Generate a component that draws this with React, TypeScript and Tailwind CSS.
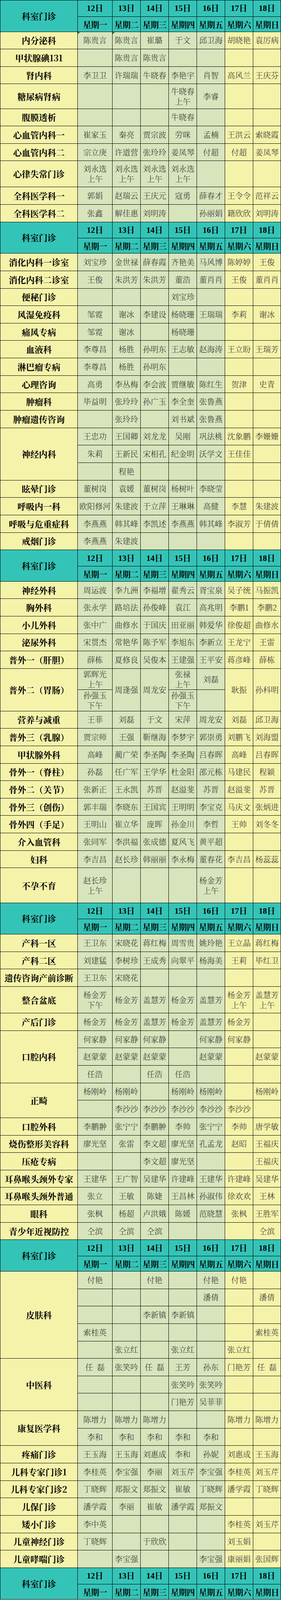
import React from 'react';

type Cell = string | { t: string; span: number } | null;
type Group = { label: string; rows: Cell[][]; h?: string[]; flag?: boolean };

const H = {
  date: 'h-[40.74px]',
  week: 'h-[37.82px]',
  weekLast: 'h-[38.82px]',
  row: 'h-[43.65px]',
  tall65: 'h-[62.09px]',
  tall69: 'h-[65.97px]',
  half: 'h-[53.35px]',
  tall92: 'h-[88.3px]',
  tall70: 'h-[66.94px]',
};
const SPAN: Record<number, string> = { 1: '', 2: 'row-span-2', 3: 'row-span-3', 5: 'row-span-5' };

const dates = ['12日', '13日', '14日', '15日', '16日', '17日', '18日'];
const weeks = ['星期一', '星期二', '星期三', '星期四', '星期五', '星期六', '星期日'];

const r = (s: string): Cell[] => s.split(',').map((x) => x.replace(/\|/g, '\n'));

const sec1: Group[] = [
  { label: '内分泌科', rows: [r('陈贵言,陈贵言,崔璐,于文,邱卫海,胡晓艳,袁厉病')], flag: true },
  { label: '甲状腺碘131', rows: [r(',陈贵言,陈贵言,,,,')] },
  { label: '肾内科', rows: [r('李卫卫,许瑞瑞,牛晓春,李艳宇,肖智,高风兰,王庆芬')] },
  { label: '糖尿病肾病', h: [H.tall65], rows: [r(',,,牛晓春|上午,李睿,,')] },
  { label: '腹膜透析', rows: [r(',,,牛晓春,,,')] },
  { label: '心血管内科一', rows: [r('崔家玉,秦亮,贾宗波,劳咪,孟楠,王洪云,索晓霞')] },
  { label: '心血管内科二', rows: [r('宗立庚,许道营,张玲玲,姜凤琴,付超,付超,姜凤琴')] },
  { label: '心律失常门诊', h: [H.tall69], rows: [r('刘永选|上午,刘永选|上午,刘永选|上午,刘永选|上午,,,')] },
  { label: '全科医学科一', rows: [r('郭娟,赵瑞云,王庆元,寇勇,薛春才,王令令,范祥云')] },
  { label: '全科医学科二', rows: [r('张鑫,解佳惠,刘明涛,,孙丽娟,籍欣欣,刘明涛')] },
];

const sec2: Group[] = [
  { label: '消化内科一诊室', rows: [r('刘宝珍,金世禄,薛春霞,齐艳美,马风博,陈婷婷,王俊')] },
  { label: '消化内科二诊室', rows: [r('王俊,朱洪芳,朱洪芳,董浩,董肖肖,王俊,董肖肖')] },
  { label: '便秘门诊', rows: [r(',,,刘宝珍,,,')] },
  { label: '风湿免疫科', rows: [r('邹霓,谢冰,李建设,杨晓珊,王瑞瑞,李莉,谢冰')] },
  { label: '痛风专病', rows: [r('邹霓,谢冰,,杨晓珊,,,')] },
  { label: '血液科', rows: [r('李尊昌,杨胜,孙明东,王志敏,赵海涛,王立盼,王瑞芳')] },
  { label: '淋巴瘤专病', rows: [r('李尊昌,杨胜,孙明东,,,,')] },
  { label: '心理咨询', rows: [r('高勇,李丛梅,李会波,贾继敏,陈红生,贺津,史青')] },
  { label: '肿瘤科', rows: [r('毕益明,张玲玲,孙广玉,李全奎,张鲁燕,,')] },
  { label: '肿瘤遗传咨询', rows: [r(',张玲玲,,刘书斌,张鲁燕,,')] },
  {
    label: '神经内科',
    rows: [
      r('王忠功,王国卿,刘龙龙,吴刚,巩法桃,沈象鹏,李姗姗'),
      r('朱莉,王新民,宋相孔,纪金明,沃学文,王佳佳,'),
      r(',程艳,,,,,'),
    ],
  },
  { label: '眩晕门诊', rows: [r('董树岗,袁媛,董树岗,杨树叶,李晓莹,,')] },
  { label: '呼吸内一科', rows: [r('欧阳修河,朱建波,于立萍,王琳琳,高健,李慧,朱建波')] },
  { label: '呼吸与危重症科', rows: [r('李燕燕,韩其峰,李凯述,李燕燕,韩其峰,李淑芳,于倩倩')] },
  { label: '戒烟门诊', rows: [r('李燕燕,朱建波,,,,,')] },
];

const sec3: Group[] = [
  { label: '神经外科', rows: [r('周运波,李九洲,李福增,翟秀云,胥宝泉,吴子统,马振凯')] },
  { label: '胸外科', rows: [r('张永学,路培法,孙俊峰,袁江,高兆明,李鹏1,李鹏2')] },
  { label: '小儿外科', rows: [r('张中广,曲修水,于国庆,田亚丽,韩爱华,徐俊超,曲修水')] },
  { label: '泌尿外科', rows: [r('宋贯杰,常艳华,陈予军,李旭东,李新立,王龙宁,王雷')] },
  { label: '普外一（肝胆）', rows: [r('薛栋,夏修良,吴俊本,王建强,王平安,蒋彦峰,薛栋')] },
  {
    label: '普外二（胃肠）',
    h: [H.half, H.half],
    rows: [
      [
        '郭辉光\n上午',
        { t: '周逢强', span: 2 },
        { t: '周龙安', span: 2 },
        '张禄\n上午',
        '刘磊',
        { t: '耿振', span: 2 },
        { t: '孙科明', span: 2 },
      ],
      ['孙强玉\n下午', null, null, '孙强玉\n下午', '', null, null],
    ],
  },
  { label: '营养与减重', rows: [r('王菲,刘磊,于文,宋萍,周龙安,刘磊,邱卫海')] },
  { label: '普外三（乳腺）', rows: [r('贾宗师,王强,靳继海,李梦宇,郭崇勇,刘鹏飞,刘海盟')] },
  { label: '甲状腺外科', rows: [r('高峰,蔺广荣,李圣陶,李圣陶,吕春晖,高峰,吕春晖')] },
  { label: '骨外一（脊柱）', rows: [r('孙磊,任广军,王学华,杜金阳,邵元栋,马建民,程颖')] },
  { label: '骨外二（关节）', rows: [r('张新正,王永凯,苏晋,赵溢斐,苏晋,赵溢斐,苏晋')] },
  { label: '骨外三（创伤）', rows: [r('郭丰瑞,李晓东,王国宾,王明明,李宝克,马庆文,张炳进')] },
  { label: '骨外四（手足）', rows: [r('王明山,崔立华,庞晖,孙金川,李哲,王帅,刘冬冬')] },
  { label: '介入血管科', rows: [r('张同军,李洪福,张成德,夏风飞,黄平超,,')] },
  { label: '妇科', rows: [r('李吉昌,赵长珍,韩丽丽,李永梅,董春花,李吉昌,杨蕊蕊')] },
  { label: '不孕不育', h: [H.tall92], rows: [r('赵长珍|上午,,,,杨金芳|上午,,')] },
];

const sec4: Group[] = [
  { label: '产科一区', rows: [r('王卫东,宋晓花,蒋红梅,周雪贵,姚玲艳,王立晶,蒋红梅')] },
  { label: '产科二区', rows: [r('刘建猛,李树珍,王成秀,向翠平,杨海美,王莉,毕红卫')] },
  { label: '遗传咨询产前诊断', rows: [r('王卫东,宋晓花,,,,,')] },
  {
    label: '整合盆底',
    h: [H.tall70],
    rows: [r('杨金芳|下午,杨金芳,盖慧芳,杨金芳,盖慧芳,杨金芳|上午,盖慧芳|上午')],
  },
  { label: '产后门诊', rows: [r('杨金芳,杨金芳,盖慧芳,杨金芳,盖慧芳,杨金芳,')] },
  {
    label: '口腔内科',
    rows: [
      r('何家静,何家静,何家静,,何家静,何家静,'),
      r('赵蒙蒙,赵蒙蒙,赵蒙蒙,,赵蒙蒙,,赵蒙蒙'),
      r('任浩,,任浩,任浩,,,'),
    ],
  },
  {
    label: '正畸',
    rows: [r('杨刚岭,杨刚岭,,杨刚岭,杨刚岭,,杨刚岭'), r(',李沙沙,李沙沙,李沙沙,李沙沙,李沙沙,')],
  },
  { label: '口腔外科', rows: [r('李鹏翀,张宁宁,李鹏翀,李帅,张宁宁,李帅,唐学敏')] },
  { label: '烧伤整形美容科', rows: [r('廖光坚,张雷,李文超,廖光坚,孔孟龙,赵昭,王福庆')] },
  { label: '压疮专病', rows: [r(',,李文超,廖光坚,,,王福庆')] },
  { label: '耳鼻喉头颈外专家', rows: [r('王建华,王广智,吴建华,许建峰,王建华,许建峰,吴建华')] },
  { label: '耳鼻喉头颈外普通', rows: [r('张立,王敏,陈婕,王昌林,孙淑伟,徐欢欢,王林')] },
  { label: '眼科', rows: [r('张枫,杨超,卢洪娥,陈媛,范晓慧,张枫,王胜军')] },
  { label: '青少年近视防控', rows: [r('仝滨,仝滨,仝滨,,,,仝滨')] },
];

const sec5: Group[] = [
  {
    label: '皮肤科',
    rows: [
      r('付艳,,付艳,,付艳,付艳,'),
      r(',,,,潘倩,,潘倩'),
      r(',,李新镇,李新镇,,,'),
      r('索桂英,,,,,,索桂英'),
      r(',张立红,,张立红,,张立红,'),
    ],
  },
  {
    label: '中医科',
    rows: [
      r('任\u2002磊,张笑吟,任\u2002磊,王芳,孙东,门艳芳,任\u2002磊'),
      r(',,,张笑吟,张笑吟,,'),
      r(',,,门艳芳,吴菲菲,,'),
    ],
  },
  {
    label: '康复医学科',
    rows: [r('陈增力,陈增力,陈增力,,,陈增力,陈增力'), r('李和,李和,李和,李和,李和,,')],
  },
  { label: '疼痛门诊', rows: [r('王玉海,王玉海,刘惠成,李和,孙妮,刘惠成,王玉海')] },
  { label: '儿科专家门诊1', rows: [r('李桂英,李宝强,李丽,刘玉芹,李宝强,李桂英,刘玉芹')] },
  { label: '儿科专家门诊2', rows: [r('丁晓辉,郑振文,郑振文,崔敏,丁晓辉,潘学霞,丁晓辉')] },
  { label: '儿保门诊', rows: [r('潘学霞,李丽,崔敏,潘学霞,郑振文,,')] },
  { label: '矮小门诊', rows: [r('李中英,,,,,李桂英,刘玉芹')] },
  { label: '儿童神经门诊', rows: [r('丁晓辉,,于欣欣,,,刘玉娟,')] },
  { label: '儿童哮喘门诊', rows: [r(',李宝强,,,李宝强,康丽娟,张国辉')] },
];

function Header({ id, last }: { id: string; last?: boolean }) {
  return (
    <React.Fragment>
      <div className="row-span-2 flex items-center justify-center overflow-hidden bg-[#34c4b7] text-[22px] leading-[30px] font-bold text-black">
        科室门诊
      </div>
      {dates.map((d) => (
        <div
          key={id + d}
          className={`flex ${H.date} items-center justify-center overflow-hidden bg-[#34c4b7] font-['Liberation_Serif','Noto_Serif_CJK_SC','Noto_Sans_CJK_SC',serif] text-[21px] leading-[28px] font-bold text-black`}
        >
          {d}
        </div>
      ))}
      {weeks.map((w) => (
        <div
          key={id + w}
          className={`flex ${last ? H.weekLast : H.week} items-center justify-center overflow-hidden whitespace-nowrap bg-[#34c4b7] text-[21px] leading-[28px] font-bold tracking-[-0.5px] text-black`}
        >
          {w}
        </div>
      ))}
    </React.Fragment>
  );
}

function GroupRows({ g }: { g: Group }) {
  const n = g.rows.length;
  const out: React.ReactNode[] = [];
  out.push(
    <div
      key="label"
      className={`${SPAN[n]} flex items-center justify-center overflow-hidden whitespace-nowrap bg-[#f5f3aa] text-[22px] leading-[30px] font-bold text-black`}
    >
      {g.label}
    </div>
  );
  g.rows.forEach((row, ri) => {
    row.forEach((cell, ci) => {
      if (cell === null) return;
      const isObj = typeof cell === 'object';
      const text = isObj ? cell.t : cell;
      const span = isObj ? cell.span : 1;
      const bg = ci < 5 ? 'bg-[#d8e4bc]' : 'bg-[#f5f3aa]';
      const hc = span === 1 ? g.h?.[ri] ?? H.row : '';
      out.push(
        <div
          key={ri + '-' + ci}
          className={`${SPAN[span]} ${hc} ${bg} relative flex items-center justify-center overflow-hidden whitespace-pre-line text-center text-[20px] leading-[26px] font-light text-[#2b2b2b]`}
        >
          {g.flag && ri === 0 && ci < 2 ? (
            <span className="absolute left-0 top-0 h-0 w-0 border-r-[6px] border-t-[6px] border-r-transparent border-t-[#1f8a2e]" />
          ) : null}
          {text}
        </div>
      );
    });
  });
  return <React.Fragment>{out}</React.Fragment>;
}

function Section({ id, groups }: { id: string; groups: Group[] }) {
  return (
    <React.Fragment>
      <Header id={id} />
      {groups.map((g) => (
        <GroupRows key={id + g.label} g={g} />
      ))}
    </React.Fragment>
  );
}

export default function App() {
  return (
    <div className="w-[719px] bg-white font-['Noto_Serif_CJK_SC','Noto_Sans_CJK_SC','Noto_Sans',sans-serif]">
      <div className="grid grid-cols-[197px_88px_71px_71px_71px_71px_71px_70px] gap-px bg-black p-px">
        <Section id="s1" groups={sec1} />
        <Section id="s2" groups={sec2} />
        <Section id="s3" groups={sec3} />
        <Section id="s4" groups={sec4} />
        <Section id="s5" groups={sec5} />
        <Header id="s6" last />
      </div>
    </div>
  );
}
